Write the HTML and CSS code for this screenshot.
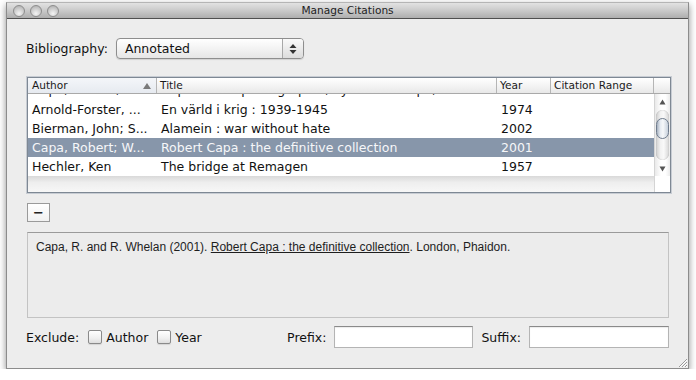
FILE: index.html
```html
<!DOCTYPE html>
<html lang="en">
<head>
  <meta charset="UTF-8">
  <title>Manage Citations</title>
  <meta name="viewport" content="width=device-width, initial-scale=1">
  <link rel="stylesheet" href="styles.css">
</head>
<body>
  <div class="window">
    <div class="titlebar">
      <div class="lights">
        <span class="light"></span>
        <span class="light"></span>
        <span class="light"></span>
      </div>
      <div class="title">Manage Citations</div>
    </div>

    <div class="content">
      <div class="bib-row">
        <span class="label">Bibliography:</span>
        <div class="popup">
          <span class="popup-value">Annotated</span>
          <span class="popup-arrows">
            <svg width="8" height="12" viewBox="0 0 8 12">
              <path d="M4 1 L7.5 5 L0.5 5 Z" fill="#333"/>
              <path d="M4 11 L7.5 7 L0.5 7 Z" fill="#333"/>
            </svg>
          </span>
        </div>
      </div>

      <div class="table-frame">
        <div class="thead">
          <div class="th th-sorted">Author<span class="sort-arrow"></span></div>
          <div class="th">Title</div>
          <div class="th">Year</div>
          <div class="th">Citation Range</div>
          <div class="th th-corner"></div>
        </div>
        <div class="tbody">
          <div class="rows">
            <div class="row row-partial">
              <div class="td">Capa, Cornell; Kersh...</div>
              <div class="td">Capa : cette photographie, by Cornell Capa, Richard Whelan</div>
              <div class="td">1997</div>
              <div class="td"></div>
            </div>
            <div class="row">
              <div class="td">Arnold-Forster, ...</div>
              <div class="td">En värld i krig : 1939-1945</div>
              <div class="td">1974</div>
              <div class="td"></div>
            </div>
            <div class="row">
              <div class="td">Bierman, John; S...</div>
              <div class="td">Alamein : war without hate</div>
              <div class="td">2002</div>
              <div class="td"></div>
            </div>
            <div class="row selected">
              <div class="td">Capa, Robert; W...</div>
              <div class="td">Robert Capa : the definitive collection</div>
              <div class="td">2001</div>
              <div class="td"></div>
            </div>
            <div class="row">
              <div class="td">Hechler, Ken</div>
              <div class="td">The bridge at Remagen</div>
              <div class="td">1957</div>
              <div class="td"></div>
            </div>
          </div>
          <div class="vscroll">
            <div class="scroll-btn">
              <svg width="7" height="6" viewBox="0 0 7 6"><path d="M3.5 0.5 L6.5 5.5 L0.5 5.5 Z" fill="#555"/></svg>
            </div>
            <div class="scroll-track">
              <div class="scroll-thumb"></div>
            </div>
            <div class="scroll-btn">
              <svg width="7" height="6" viewBox="0 0 7 6"><path d="M3.5 5.5 L6.5 0.5 L0.5 0.5 Z" fill="#555"/></svg>
            </div>
          </div>
        </div>
        <div class="tfoot">
          <div class="tfoot-fill"></div>
          <div class="tfoot-corner"></div>
        </div>
      </div>

      <button class="minus-btn">&minus;</button>

      <div class="preview">
        Capa, R. and R. Whelan (2001). <u>Robert Capa : the definitive collection</u>. London, Phaidon.
      </div>

      <div class="bottom-row">
        <span class="label">Exclude:</span>
        <label class="check"><span class="box"></span>Author</label>
        <label class="check"><span class="box"></span>Year</label>
        <span class="label prefix-label">Prefix:</span>
        <span class="field field-prefix"></span>
        <span class="label suffix-label">Suffix:</span>
        <span class="field"></span>
      </div>
    </div>

    <svg class="grip" width="12" height="12" viewBox="0 0 12 12">
      <path d="M11 3 L3 11 M11 6 L6 11 M11 9 L9 11" stroke="#999" stroke-width="1"/>
      <path d="M11 4 L4 11 M11 7 L7 11 M11 10 L10 11" stroke="#fff" stroke-width="1"/>
    </svg>
  </div>
</body>
</html>
```

FILE: styles.css
```css
body {
  margin: 0;
  background: #fff;
  font-family: 'DejaVu Sans', Verdana, sans-serif;
  font-size: 12.5px;
  color: #111;
}
.window {
  position: relative;
  margin: 2px 0 0 6px;
  width: 681px;
  height: 365px;
  border: 1px solid #8c8c8c;
  border-top-color: #b5b5b5;
  background: #ededed;
  box-shadow: 0 3px 7px rgba(0,0,0,0.45);
  display: flex;
  flex-direction: column;
}
.titlebar {
  height: 15px;
  flex: none;
  display: flex;
  align-items: center;
  position: relative;
  background: linear-gradient(#e2e2e2 0%, #cfcfcf 40%, #aeaeae 100%);
  border-bottom: 1px solid #4f4f4f;
}
.lights {
  display: flex;
  gap: 5px;
  margin-left: 6px;
}
.light {
  width: 12px;
  height: 12px;
  box-sizing: border-box;
  border-radius: 50%;
  border: 1px solid #8d8d8d;
  background: radial-gradient(circle at 50% 75%, #f4f4f4 0%, #cfcfcf 50%, #a9a9a9 100%);
}
.title {
  position: absolute;
  left: 0;
  right: 0;
  text-align: center;
  font-size: 10.6px;
  color: #222;
  line-height: 15px;
}
.content {
  flex: 1;
  padding: 19px 19px 0 19px;
  display: flex;
  flex-direction: column;
}
.bib-row {
  display: flex;
  align-items: center;
  height: 21px;
}
.bib-row .label {
  margin-right: 8px;
}
.popup {
  width: 188px;
  height: 21px;
  box-sizing: border-box;
  border: 1px solid #8e8e8e;
  border-radius: 4px;
  background: linear-gradient(#ffffff 0%, #f3f3f3 50%, #e6e6e6 100%);
  display: flex;
  align-items: center;
  box-shadow: 0 1px 1px rgba(0,0,0,0.12);
}
.popup-value {
  flex: 1;
  padding-left: 8px;
}
.popup-arrows {
  width: 20px;
  height: 19px;
  border-left: 1px solid #a8a8a8;
  display: flex;
  align-items: center;
  justify-content: center;
  background: linear-gradient(#fafafa 0%, #dcdcdc 100%);
  border-radius: 0 3px 3px 0;
}
.table-frame {
  margin-top: 18px;
  width: 642px;
  border: 1px solid #7e8894;
  box-shadow: 0 0 0 1px #c7ccd3;
  margin-left: 1px;
  background: #fff;
}
.thead, .row {
  display: grid;
  grid-template-columns: 129px 340px 54px 103px 16px;
}
.row {
  grid-template-columns: 129px 340px 54px 103px;
  height: 19px;
  align-items: center;
}
.thead {
  height: 15px;
  border-bottom: 1px solid #a9a9a9;
  background: linear-gradient(#ffffff 0%, #f4f4f4 50%, #e8e8e8 100%);
  font-size: 10.6px;
  color: #1a1a1a;
}
.th {
  position: relative;
  line-height: 15px;
  padding-left: 3px;
  border-right: 1px solid #b5b5b5;
  white-space: nowrap;
  overflow: hidden;
}
.th-sorted {
  padding-left: 4px;
  background: linear-gradient(#f4f6f9 0%, #e6eaf0 100%);
}
.th-corner {
  border-right: none;
}
.sort-arrow {
  position: absolute;
  right: 5px;
  top: 5px;
  width: 0;
  height: 0;
  border-left: 4px solid transparent;
  border-right: 4px solid transparent;
  border-bottom: 6px solid #7a7a7a;
}
.tbody {
  display: flex;
  height: 82px;
}
.rows {
  flex: 1;
  overflow: hidden;
}
.row-partial {
  height: 6px;
  grid-template-rows: 6px;
  overflow: hidden;
  align-items: start;
}
.row-partial .td {
  margin-top: -14px;
}
.td {
  padding-left: 4px;
  white-space: nowrap;
  overflow: hidden;
  line-height: 19px;
}
.selected {
  background: #8796aa;
  color: #f6f7f9;
}
.vscroll {
  width: 15px;
  border-left: 1px solid #d4d4d4;
  display: flex;
  flex-direction: column;
  background: linear-gradient(90deg, #e9e9e9 0%, #ffffff 40%, #ffffff 70%, #ececec 100%);
}
.scroll-btn {
  height: 15px;
  display: flex;
  align-items: center;
  justify-content: center;
}
.scroll-track {
  flex: 1;
  margin: 1px 1px;
  border-radius: 7px;
  background: linear-gradient(90deg, #cfcfcf 0%, #f2f2f2 35%, #f9f9f9 60%, #d6d6d6 100%);
  box-shadow: inset 0 0 1px rgba(0,0,0,0.35);
}
.scroll-thumb {
  margin-top: 8px;
  height: 21px;
  border-radius: 7px;
  border: 1px solid #6f7c8d;
  box-sizing: border-box;
  background: linear-gradient(90deg, #a6b1c0 0%, #e6ebf1 30%, #f6f8fa 55%, #c7d0db 100%);
}
.tfoot {
  display: flex;
  height: 16px;
}
.tfoot-fill {
  flex: 1;
  background: linear-gradient(#d9d9d9 0%, #eeeeee 40%, #f7f7f7 100%);
}
.tfoot-corner {
  width: 15px;
  border-left: 1px solid #d4d4d4;
  background: #fff;
}
.minus-btn {
  margin: 10px 0 0 1px;
  width: 23px;
  height: 19px;
  padding: 0;
  border: 1px solid #9a9a9a;
  background: linear-gradient(#ffffff 0%, #f1f1f1 100%);
  font-family: 'DejaVu Sans', sans-serif;
  font-size: 13px;
  font-weight: bold;
  line-height: 15px;
  color: #222;
}
.preview {
  margin: 10px 0 0 1px;
  width: 642px;
  height: 86px;
  box-sizing: border-box;
  border: 1px solid #c3c3c3;
  border-top-color: #9a9a9a;
  background: #ececec;
  padding: 7px 0 0 8px;
  font-family: 'Liberation Sans', Arial, sans-serif;
  font-size: 12px;
  color: #1e1e1e;
}
.preview u {
  text-underline-offset: 1px;
}
.bottom-row {
  margin-top: 8px;
  display: flex;
  align-items: center;
  height: 22px;
}
.check {
  display: flex;
  align-items: center;
  margin-left: 9px;
}
.check + .check {
  margin-left: 9px;
}
.box {
  width: 14px;
  height: 14px;
  box-sizing: border-box;
  border: 1px solid #8a8a8a;
  border-radius: 2px;
  background: linear-gradient(#ffffff 0%, #f0f0f0 60%, #dedede 100%);
  margin-right: 4px;
  box-shadow: 0 1px 1px rgba(0,0,0,0.1);
}
.prefix-label {
  margin-left: auto;
}
.field {
  width: 140px;
  height: 22px;
  box-sizing: border-box;
  border: 1px solid #b4b4b4;
  border-top-color: #8a8a8a;
  background: #fff;
  margin-left: 8px;
  box-shadow: inset 0 1px 1px rgba(0,0,0,0.08);
}
.field-prefix {
  width: 139px;
}
.suffix-label {
  margin-left: 8px;
}
.grip {
  position: absolute;
  right: 0;
  bottom: 0;
}
```
